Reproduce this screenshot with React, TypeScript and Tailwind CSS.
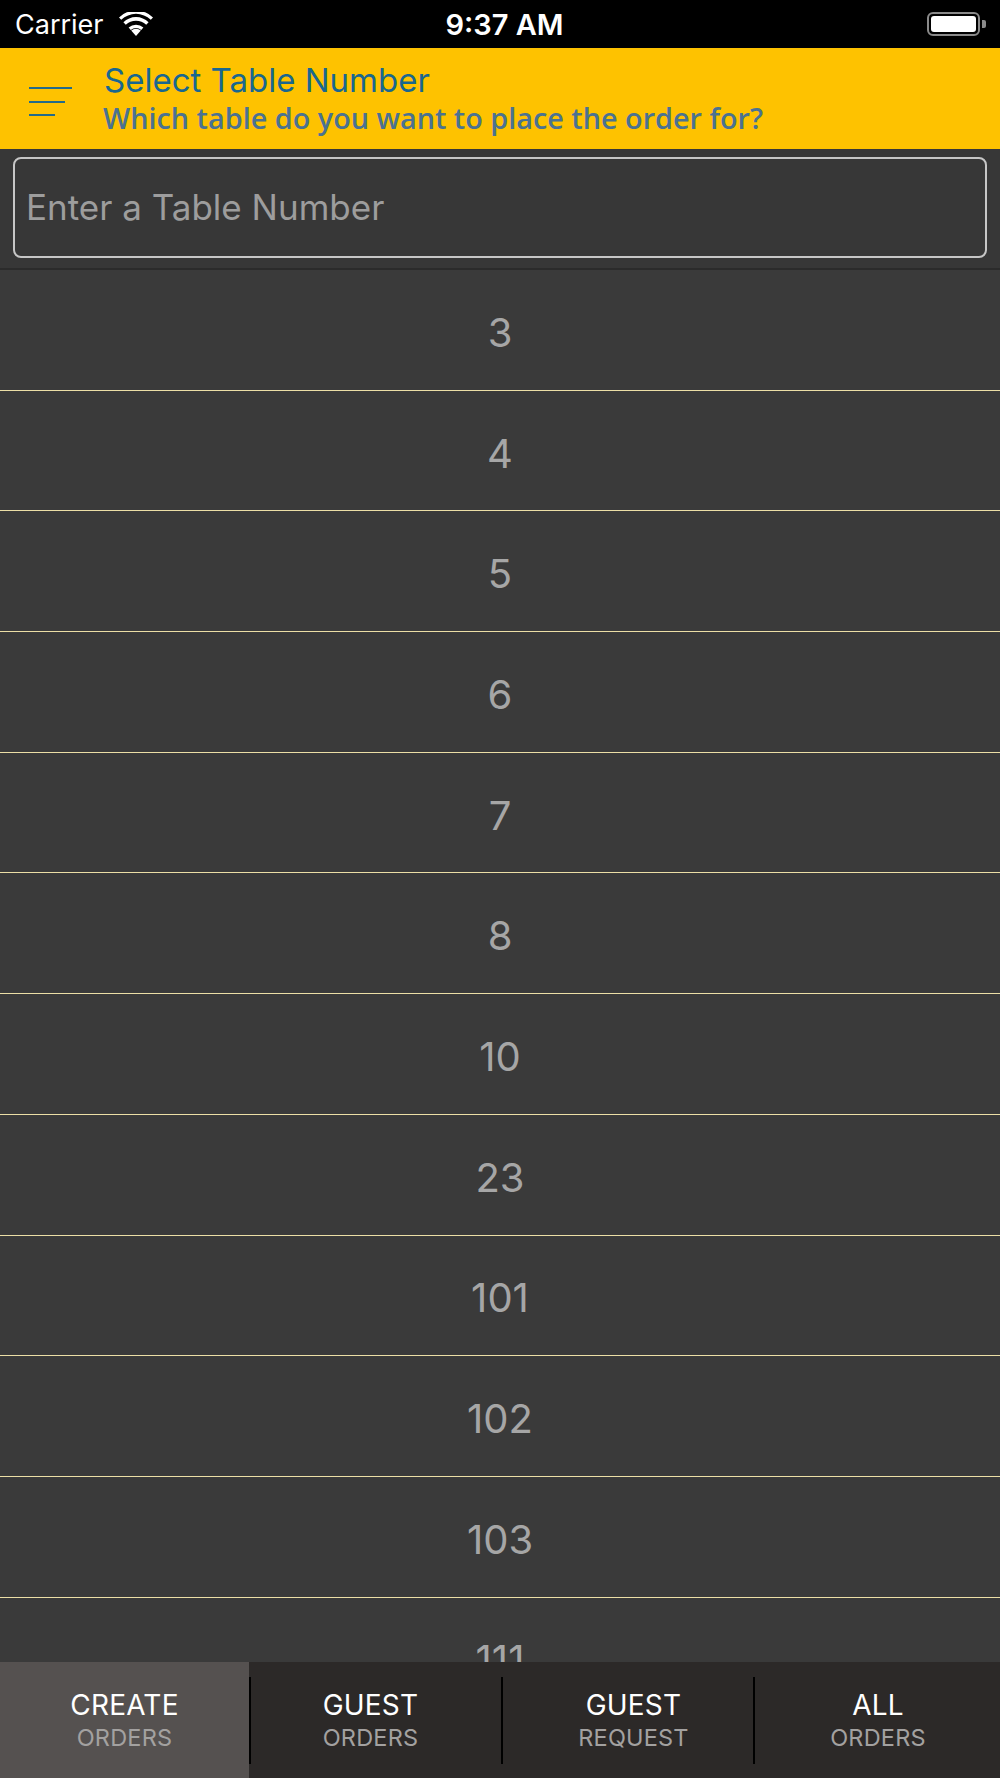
import React from "react";

const tables = ["3", "4", "5", "6", "7", "8", "10", "23", "101", "102", "103", "111", "112"];

function Wifi() {
  return (
    <svg width="34" height="24" viewBox="0 0 34 24" fill="white">
      <path d="M17 24 L12.2 18.6 A7 7 0 0 1 21.8 18.6 Z" />
      <path d="M9.6 15.6 A11 11 0 0 1 24.4 15.6 L22.2 18 A8 8 0 0 0 11.8 18 Z" />
      <path d="M4.4 10.2 A18 18 0 0 1 29.6 10.2 L27.2 12.8 A14.6 14.6 0 0 0 6.8 12.8 Z" />
      <path d="M0 5.4 A24.5 24.5 0 0 1 34 5.4 L31.8 7.8 A21.4 21.4 0 0 0 2.2 7.8 Z" />
    </svg>
  );
}

function Battery() {
  return (
    <div className="flex items-center">
      <div className="w-[53px] h-[24px] rounded-[6px] border-2 border-[#8a8a8a] p-[2px]">
        <div className="w-full h-full rounded-[3px] bg-white" />
      </div>
      <div className="w-[4px] h-[8px] rounded-r-[2px] bg-[#8a8a8a] ml-[2px]" />
    </div>
  );
}

function Tab({
  top,
  bottom,
  active,
  fixed,
  shift,
}: {
  top: string;
  bottom: string;
  active?: boolean;
  fixed?: boolean;
  shift?: string;
}) {
  return (
    <div
      className={
        (fixed ? "w-[249px] " : "flex-1 ") +
        "flex flex-col items-center justify-center " +
        (active ? "bg-[#555150]" : "bg-[#2c2928]")
      }
    >
      <div className={"flex flex-col items-center " + (shift ?? "")}>
        <div className="text-[28px] leading-[34px] text-white tracking-[0.2px]">{top}</div>
        <div className="text-[23.5px] leading-[30px] text-[#a3a1a0] tracking-[0.2px] mt-[1px]">{bottom}</div>
      </div>
    </div>
  );
}

function Divider() {
  return (
    <div className="w-[3px] bg-[#2c2928] flex items-center">
      <div className="w-[2px] h-[87px] bg-black" />
    </div>
  );
}

export default function App() {
  return (
    <div
      className="w-[1000px] h-[1778px] flex flex-col overflow-hidden bg-[#3a3a3a]"
      style={{ fontFamily: "Inter, 'Noto Sans', sans-serif" }}
    >
      {/* Status bar */}
      <div className="h-[48px] bg-black flex items-center relative px-[15px] shrink-0">
        <div className="flex items-center gap-[15px]">
          <span className="text-white text-[27px] leading-none">Carrier</span>
          <Wifi />
        </div>
        <div className="absolute left-0 right-0 top-0 h-[48px] flex items-center justify-center pl-[9px] pointer-events-none">
          <span className="text-white text-[29px] font-semibold leading-none">9:37 AM</span>
        </div>
        <div className="ml-auto mr-[-1px]">
          <Battery />
        </div>
      </div>

      {/* Header */}
      <div className="h-[101px] bg-[#fec200] flex items-center shrink-0">
        <div className="w-[104px] pl-[29px] flex flex-col gap-[11.5px] pt-[6px]">
          <div className="w-[43px] h-[2px] bg-[#236b8a]" />
          <div className="w-[36px] h-[2px] bg-[#236b8a]" />
          <div className="w-[26px] h-[2px] bg-[#236b8a]" />
        </div>
        <div className="flex flex-col">
          <div className="text-[33px] leading-[38px] text-[#19678f]">Select Table Number</div>
          <div
            className="text-[28.8px] leading-[38px] font-semibold text-[#4b7291] ml-[-1px]"
            style={{ fontFamily: "'Open Sans', sans-serif" }}
          >
            Which table do you want to place the order for?
          </div>
        </div>
      </div>

      {/* Search */}
      <div className="bg-[#373737] pt-[8px] pb-[10px] px-[13px] border-b-2 border-[#2b2b2b] shrink-0">
        <div className="h-[101px] rounded-[8px] border-2 border-[#c6c6c6] flex items-center px-[11px]">
          <span className="text-[35px] text-[#9d9d9d] leading-none">Enter a Table Number</span>
        </div>
      </div>

      {/* List */}
      <div className="flex-1 overflow-hidden">
        {tables.map((t) => (
          <div
            key={t}
            className="h-[120.7px] border-b border-[#ecdfa6] flex items-center justify-center bg-[#3a3a3a] pt-[6px]"
          >
            <span className="text-[40px] text-[#a6a6a6] leading-none">{t}</span>
          </div>
        ))}
      </div>

      {/* Tab bar */}
      <div className="h-[116px] flex shrink-0">
        <Tab top="CREATE" bottom="ORDERS" active fixed />
        <Divider />
        <Tab top="GUEST" bottom="ORDERS" fixed shift="-translate-x-[6px]" />
        <Divider />
        <Tab top="GUEST" bottom="REQUEST" fixed shift="translate-x-[5px]" />
        <Divider />
        <Tab top="ALL" bottom="ORDERS" />
      </div>
    </div>
  );
}
